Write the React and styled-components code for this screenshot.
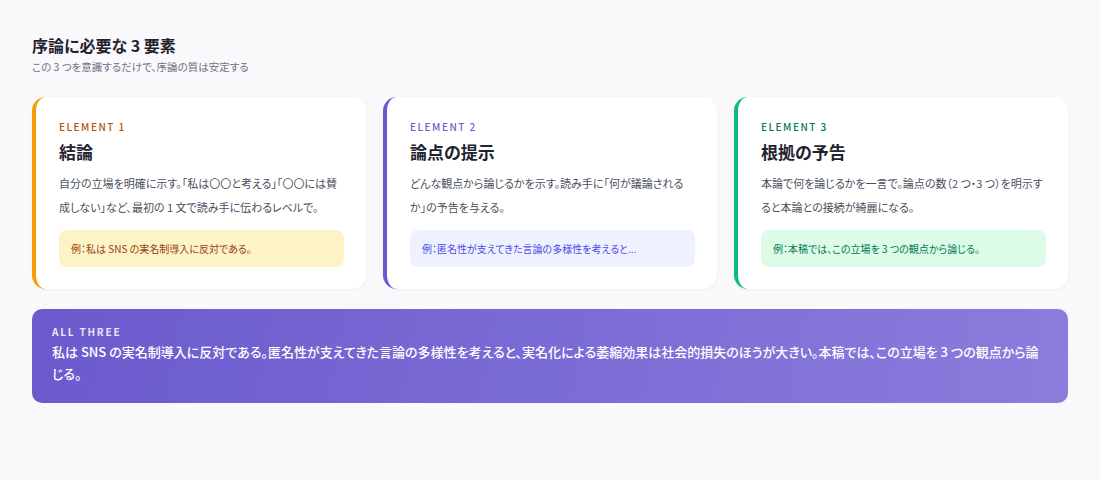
import React from "react";
import styled, { createGlobalStyle } from "styled-components";

const Global = createGlobalStyle`
  body { margin: 0; background: #f9f9fb; font-family: "Noto Sans CJK JP", "Noto Sans", sans-serif; font-feature-settings: "palt"; }
`;
const Page = styled.div`padding: 32px 32px;`;
const Title = styled.h1`margin: 0; font-size: 16px; font-weight: 700; color: #1f2330; line-height: 26px;`;
const Sub = styled.p`margin: 1px 0 0; font-size: 10.5px; color: #6b7280; line-height: 16px;`;
const Grid = styled.div`display: grid; grid-template-columns: repeat(3, 1fr); gap: 17px; margin-top: 22px;`;
const Card = styled.div`
  background: #fff; border-radius: 14px; border-left: 4px solid ${p => p.$c};
  padding: 23px 22px 22px 23px; box-shadow: 0 1px 3px rgba(30,30,60,0.05); min-width: 0;
`;
const Label = styled.div`font-size: 10px; letter-spacing: 1.5px; color: ${p => p.$c}; font-weight: 500; line-height: 14px;`;
const CardTitle = styled.h2`margin: 6px 0 7px; font-size: 17px; font-weight: 700; color: #1f2330; line-height: 24px;`;
const Body = styled.p`margin: 0; font-size: 11px; line-height: 24px; color: #4b5060; min-height: 48px;`;
const Example = styled.div`
  margin-top: 11px; background: ${p => p.$bg}; color: ${p => p.$fg}; border-radius: 8px;
  padding: 0 12px; height: 37px; line-height: 37px; font-size: 10px;
  white-space: nowrap; overflow: hidden;
`;
const Banner = styled.div`
  margin-top: 20px; border-radius: 10px; padding: 16px 20px 18px;
  background: linear-gradient(100deg, #6a5acd 0%, #8a7ddc 100%); color: #fff;
`;
const BLabel = styled.div`font-size: 10px; font-weight: 700; letter-spacing: 1.8px; opacity: 0.85; line-height: 14px;`;
const BText = styled.p`margin: 2px 0 0; font-size: 13px; font-weight: 500; line-height: 22px;`;

const cards = [
  { c: "#f59e0b", lc: "#b45309", bg: "#fef3c7", fg: "#92400e", n: 1, t: "結論",
    b: "自分の立場を明確に示す。「私は〇〇と考える」「〇〇には賛成しない」など、最初の 1 文で読み手に伝わるレベルで。",
    e: "例：私は SNS の実名制導入に反対である。" },
  { c: "#6a5acd", lc: "#6d5dd3", bg: "#eef2ff", fg: "#4f46e5", n: 2, t: "論点の提示",
    b: "どんな観点から論じるかを示す。読み手に「何が議論されるか」の予告を与える。",
    e: "例：匿名性が支えてきた言論の多様性を考えると..." },
  { c: "#10b981", lc: "#047857", bg: "#dcfce7", fg: "#047857", n: 3, t: "根拠の予告",
    b: "本論で何を論じるかを一言で。論点の数（2 つ・3 つ）を明示すると本論との接続が綺麗になる。",
    e: "例：本稿では、この立場を 3 つの観点から論じる。" },
];

export default function App() {
  return (
    <Page>
      <Global />
      <Title>序論に必要な 3 要素</Title>
      <Sub>この 3 つを意識するだけで、序論の質は安定する</Sub>
      <Grid>
        {cards.map(k => (
          <Card key={k.n} $c={k.c}>
            <Label $c={k.lc}>ELEMENT {k.n}</Label>
            <CardTitle>{k.t}</CardTitle>
            <Body>{k.b}</Body>
            <Example $bg={k.bg} $fg={k.fg}>{k.e}</Example>
          </Card>
        ))}
      </Grid>
      <Banner>
        <BLabel>ALL THREE</BLabel>
        <BText>私は SNS の実名制導入に反対である。匿名性が支えてきた言論の多様性を考えると、実名化による萎縮効果は社会的損失のほうが大きい。本稿では、この立場を 3 つの観点から論じる。</BText>
      </Banner>
    </Page>
  );
}
